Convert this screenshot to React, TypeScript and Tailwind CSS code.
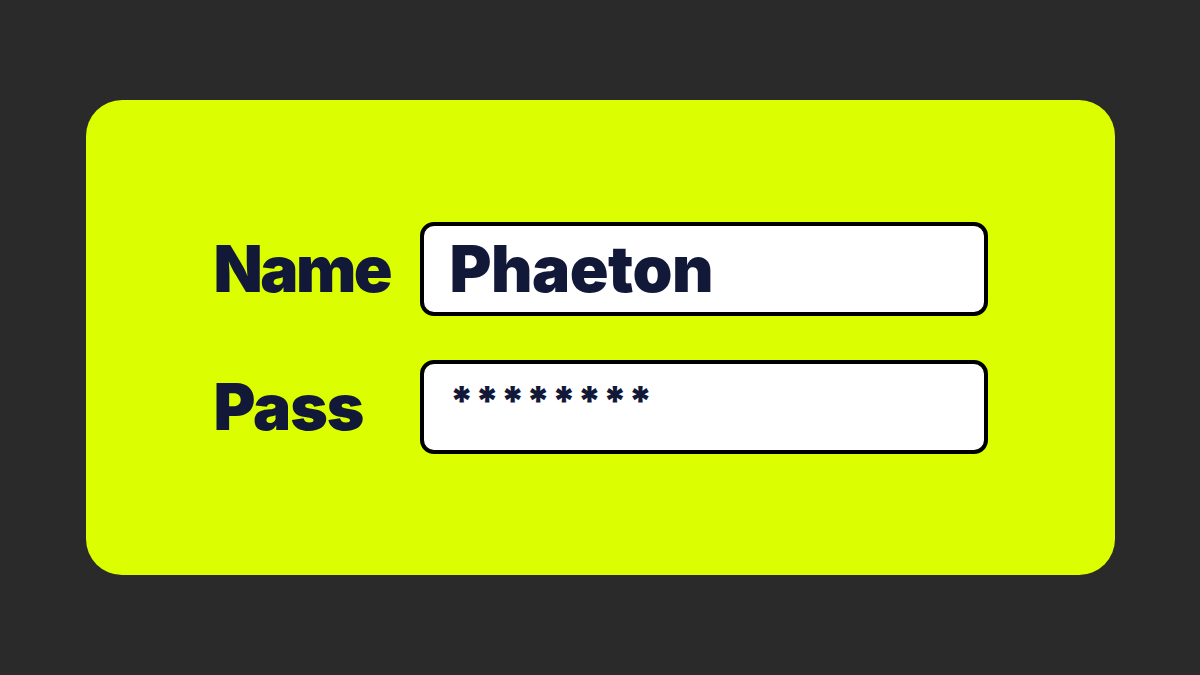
export default function App() {
  const rows = [
    { label: 'Name', value: 'Phaeton', secret: false, track: 'tracking-[-2.5px]' },
    { label: 'Pass', value: '********', secret: true, track: 'tracking-[-1px]' },
  ];

  return (
    <div className="w-full h-[675px] bg-[#2a2a2a] flex items-center justify-center" style={{ fontFamily: 'Inter, "Noto Sans", sans-serif' }}>
      <div className="w-[1029px] h-[475px] bg-[#dbff00] rounded-[36px] flex flex-col justify-center gap-[44px] pl-[128px]">
        {rows.map((r) => (
          <div key={r.label} className="flex items-center">
            <div className={`w-[206px] text-[64px] font-black text-[#121838] leading-none ${r.track}`}>{r.label}</div>
            <div className="w-[568px] h-[94px] bg-white border-4 border-black rounded-[14px] pl-[26px] flex items-center">
              {r.secret ? (
                <span className="text-[40px] font-black text-[#121838] tracking-[1.2px] leading-none -mt-[12px]">{r.value}</span>
              ) : (
                <span className="text-[64px] font-black text-[#121838] tracking-[-0.5px] leading-none">{r.value}</span>
              )}
            </div>
          </div>
        ))}
      </div>
    </div>
  );
}
